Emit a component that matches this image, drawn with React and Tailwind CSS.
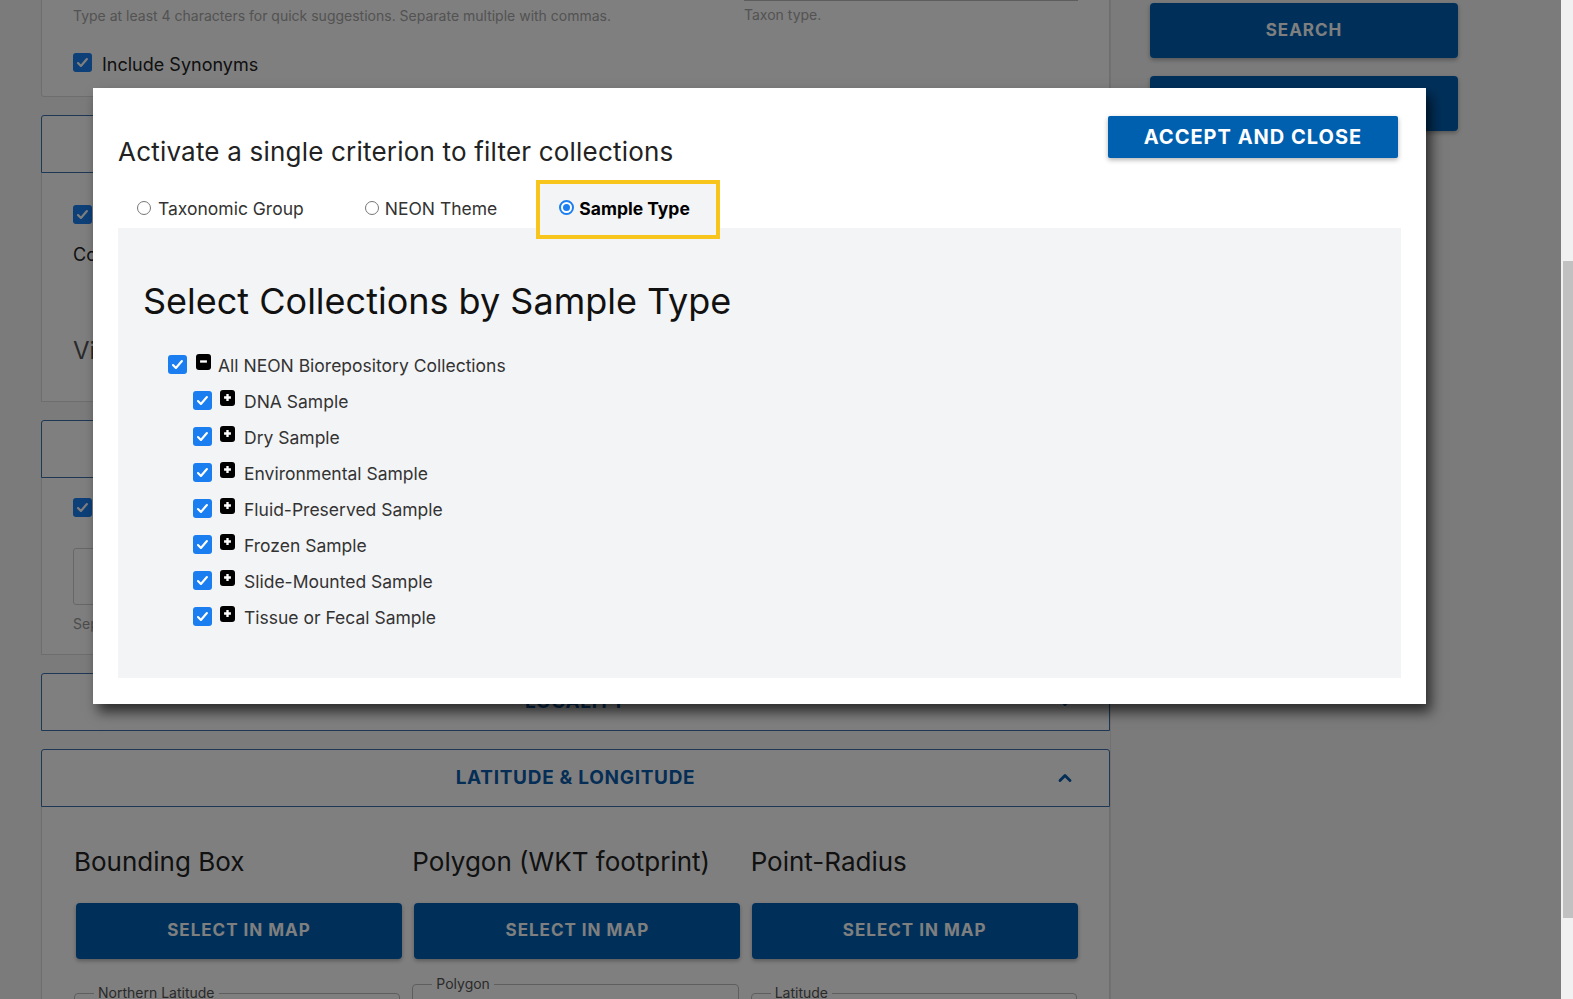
import React from "react";
import { ChevronDown, ChevronUp } from "lucide-react";

const samples = [
  "DNA Sample",
  "Dry Sample",
  "Environmental Sample",
  "Fluid-Preserved Sample",
  "Frozen Sample",
  "Slide-Mounted Sample",
  "Tissue or Fecal Sample",
];

function Check() {
  return (
    <span className="flex h-[19px] w-[19px] shrink-0 items-center justify-center rounded-[3px] bg-[#1a7ef0]">
      <svg viewBox="0 0 16 16" className="h-[15px] w-[15px]">
        <path d="M3.2 8.6l3.1 3.1 6.4-7.4" fill="none" stroke="white" strokeWidth="2.3" strokeLinecap="round" strokeLinejoin="round" />
      </svg>
    </span>
  );
}

function Toggle({ open }) {
  return (
    <span className="-mt-[5px] flex h-[16px] w-[15px] shrink-0 items-center justify-center rounded-[3px] bg-black">
      <svg viewBox="0 0 10 10" className="h-[9px] w-[9px]">
        {open ? (
          <path d="M1.2 5h7.6" stroke="white" strokeWidth="2.6" />
        ) : (
          <path d="M5 1.2v7.6M1.2 5h7.6" stroke="white" strokeWidth="2.6" />
        )}
      </svg>
    </span>
  );
}

function Radio({ checked }) {
  if (checked)
    return (
      <span className="-mt-[4px] flex h-[15px] w-[15px] items-center justify-center rounded-full border-[2px] border-[#1a7ef0] bg-white">
        <span className="h-[7px] w-[7px] rounded-full bg-[#1a7ef0]" />
      </span>
    );
  return <span className="-mt-[4px] h-[14px] w-[14px] rounded-full border border-[#767676] bg-white" />;
}

function AccHeader({ title, open, className = "" }) {
  return (
    <div className={"relative flex h-[58px] shrink-0 items-center justify-center rounded-t-[3px] border border-[#3a6fa8] bg-white " + className}>
      <span className="text-[19px] font-bold tracking-[0.7px] text-[#0b5cad]">{title}</span>
      <span className="absolute right-[34px] text-[#0b5cad]">
        {open ? <ChevronUp size={20} strokeWidth={3.4} /> : <ChevronDown size={20} strokeWidth={3.4} />}
      </span>
    </div>
  );
}

function MapButton() {
  return (
    <button className="h-[56px] w-[326px] rounded-[4px] bg-[#0060b4] text-[17px] font-bold tracking-[1px] text-white shadow-[0_2px_4px_rgba(0,0,0,0.3)]">
      SELECT IN MAP
    </button>
  );
}

function Field({ label, className = "" }) {
  return (
    <fieldset className={"h-[60px] rounded-[4px] border border-[#bdbdbd] px-[19px] " + className}>
      <legend className="px-[4px] text-[14px] leading-[16px] text-[#555]">{label}</legend>
    </fieldset>
  );
}

export default function App() {
  return (
    <div className="flex h-[999px] w-full overflow-hidden bg-white font-[Inter,sans-serif]">
      <div className="relative flex flex-1 bg-[#f6f6f6]">
        {/* page beneath the dialog */}
        <div className="ml-[41px] flex w-[1069px] shrink-0 flex-col">
          <div className="h-[97px] shrink-0 rounded-b-[3px] border-x border-b border-[#dcdcdc] bg-white px-[31px]">
            <div className="flex">
              <p className="w-[672px] pt-[6px] text-[14px] leading-[20px] text-[#a6a6a6]">
                Type at least 4 characters for quick suggestions. Separate multiple with commas.
              </p>
              <div>
                <div className="h-px w-[334px] bg-[#bbbbbb]" />
                <p className="pt-[4px] text-[14px] leading-[20px] text-[#a6a6a6]">Taxon type.</p>
              </div>
            </div>
            <label className="mt-[21px] flex items-center gap-[10px] text-[18px] leading-[24px] text-[#222]">
              <Check />
              <span className="pt-[6px]">Include Synonyms</span>
            </label>
          </div>

          <AccHeader title="HIGHER TAXONOMY" open className="mt-[18px]" />
          <div className="h-[229px] shrink-0 border-x border-b border-[#dcdcdc] bg-white px-[31px] pt-[32px]">
            <Check />
            <p className="mt-[19px] text-[18px] leading-[24px] text-[#222]">Collections</p>
            <p className="mt-[68px] text-[24px] leading-[32px] text-[#555]">View</p>
          </div>

          <AccHeader title="COLLECTIONS" open className="mt-[18px]" />
          <div className="h-[177px] shrink-0 border-x border-b border-[#dcdcdc] bg-white px-[31px] pt-[20px]">
            <Check />
            <div className="mt-[31px] h-[57px] w-[320px] rounded-[3px] border border-[#cfcfcf]" />
            <p className="mt-[9px] text-[14px] leading-[20px] text-[#999]">Separate values with commas.</p>
          </div>

          <AccHeader title="LOCALITY" className="mt-[18px]" />
          <AccHeader title="LATITUDE & LONGITUDE" open className="mt-[18px]" />
          <div className="shrink-0 border-x border-[#dcdcdc] bg-white px-[32px] pb-[40px] pt-[38px]">
            <div className="grid grid-cols-3 gap-x-[12px]">
              <h3 className="text-[26px] leading-[34px] text-[#222]">Bounding Box</h3>
              <h3 className="text-[26px] leading-[34px] text-[#222]">Polygon (WKT footprint)</h3>
              <h3 className="text-[26px] leading-[34px] text-[#222]">Point-Radius</h3>
              <div className="mt-[24px] pl-[2px]"><MapButton /></div>
              <div className="mt-[24px] pl-[2px]"><MapButton /></div>
              <div className="mt-[24px] pl-[1px]"><MapButton /></div>
              <Field label="Northern Latitude" className="mt-[26px]" />
              <Field label="Polygon" className="mt-[17px]" />
              <Field label="Latitude" className="mt-[26px]" />
            </div>
          </div>
        </div>

        <div className="flex flex-1 border-l border-[#e3e3e3] pl-[39px]">
          <div className="flex w-[308px] flex-col gap-[18px] pt-[3px]">
            <button className="h-[55px] rounded-[4px] bg-[#0060b4] text-[17px] font-bold tracking-[1px] text-white shadow-[0_2px_4px_rgba(0,0,0,0.3)]">
              SEARCH
            </button>
            <button className="h-[55px] rounded-[4px] bg-[#0060b4] text-[17px] font-bold tracking-[1px] text-white shadow-[0_2px_4px_rgba(0,0,0,0.3)]">
              RESET
            </button>
          </div>
        </div>

        {/* backdrop */}
        <div className="absolute inset-0 bg-black/50" />

        {/* dialog */}
        <div className="absolute left-[93px] top-[88px] flex h-[616px] w-[1333px] flex-col bg-white px-[25px] pb-[26px] pt-[28px] shadow-[5px_8px_12px_rgba(0,0,0,0.65)]">
          <div className="flex shrink-0 items-start justify-between">
            <h2 className="mt-[20px] text-[26px] leading-[31px] tracking-[0.2px] text-[#222]">
              Activate a single criterion to filter collections
            </h2>
            <button className="mr-[3px] h-[42px] w-[290px] rounded-[2px] bg-[#0060b0] text-[20px] font-bold tracking-[1px] text-white shadow-[0_2px_5px_rgba(0,0,0,0.3)]">
              ACCEPT AND CLOSE
            </button>
          </div>

          <div className="mt-[13px] flex h-[48px] shrink-0 items-start text-[17.5px] text-[#333]">
            <label className="flex h-[59px] items-center gap-[7px] pl-[19px]">
              <Radio />
              <span>Taxonomic Group</span>
            </label>
            <label className="ml-[61px] flex h-[59px] items-center gap-[6px]">
              <Radio />
              <span>NEON Theme</span>
            </label>
            <label className="relative z-10 ml-[39px] flex h-[59px] items-center gap-[5px] border-[4px] border-[#f7c51b] bg-[#f3f4f6] pl-[19px] pr-[26px] font-bold text-black">
              <Radio checked />
              <span>Sample Type</span>
            </label>
          </div>

          <div className="flex-1 bg-[#f3f4f6] px-[25px] pt-[51px]">
            <h1 className="text-[36px] leading-[44px] text-[#111]">Select Collections by Sample Type</h1>
            <div className="mt-[23px] text-[17.5px] text-[#333]">
              <div className="flex h-[36px] items-center pl-[25px]">
                <Check />
                <span className="ml-[9px]"><Toggle open /></span>
                <span className="ml-[7px] pt-[4px]">All NEON Biorepository Collections</span>
              </div>
              {samples.map((s) => (
                <div key={s} className="flex h-[36px] items-center pl-[50px]">
                  <Check />
                  <span className="ml-[8px]"><Toggle /></span>
                  <span className="ml-[9px] pt-[4px]">{s}</span>
                </div>
              ))}
            </div>
          </div>
        </div>
      </div>

      {/* scrollbar */}
      <div className="w-[12px] shrink-0 bg-[#f1f1f1]">
        <div className="ml-[2px] mt-[261px] h-[657px] w-[10px] bg-[#c1c1c1]" />
      </div>
    </div>
  );
}
